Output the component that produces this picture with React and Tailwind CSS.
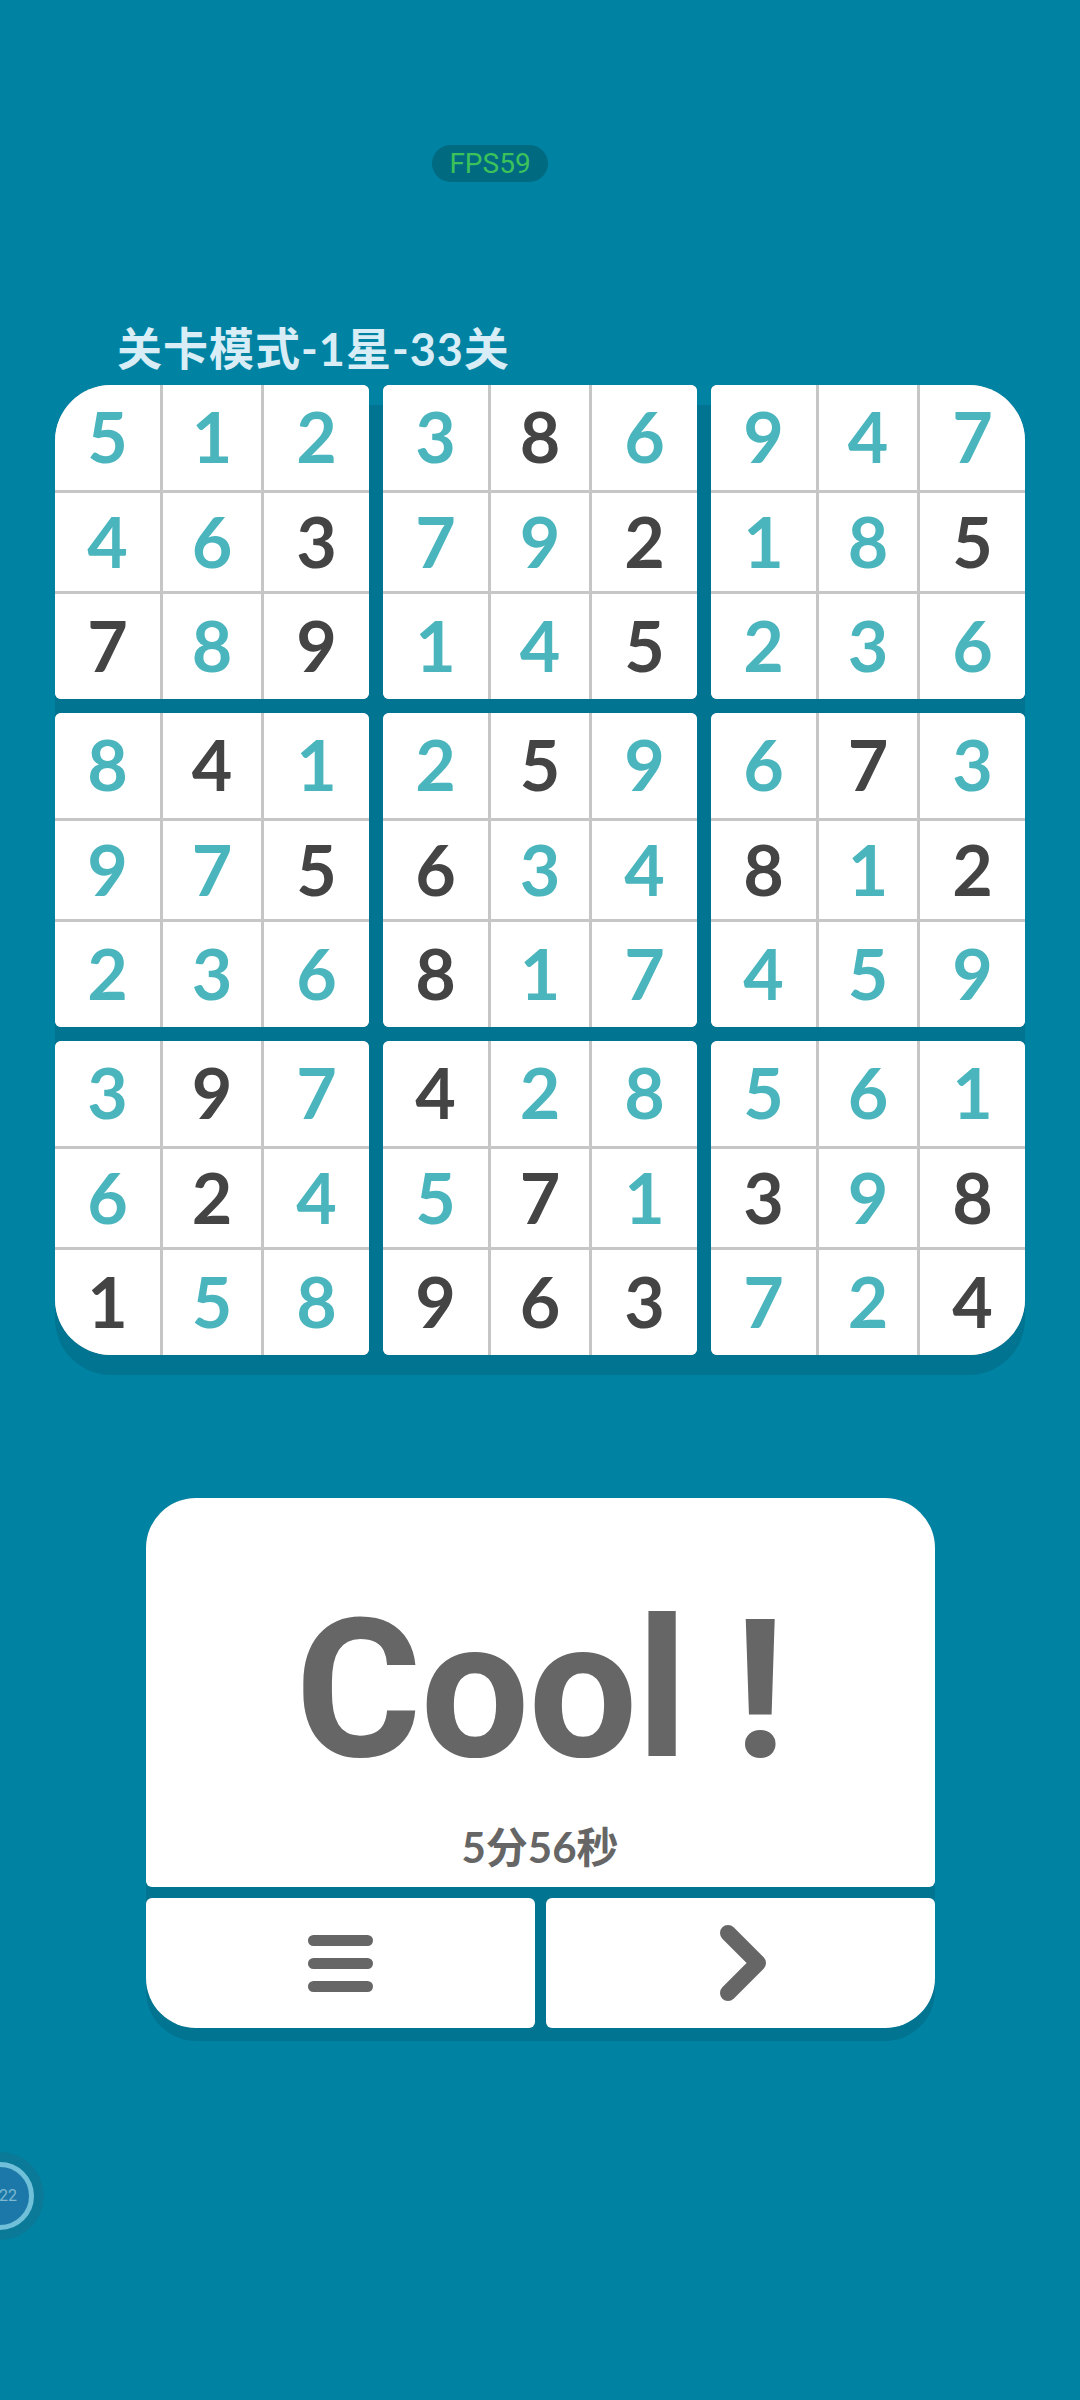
import React from 'react';

// g = given (teal), d = entered by player (dark)
const blocks = [
  ['5g 1g 2g 4g 6g 3d 7d 8g 9d', '3g 8d 6g 7g 9g 2d 1g 4g 5d', '9g 4g 7g 1g 8g 5d 2g 3g 6g'],
  ['8g 4d 1g 9g 7g 5d 2g 3g 6g', '2g 5d 9g 6d 3g 4g 8d 1g 7g', '6g 7d 3g 8d 1g 2d 4g 5g 9g'],
  ['3g 9d 7g 6g 2d 4g 1d 5g 8g', '4d 2g 8g 5g 7d 1g 9d 6d 3d', '5g 6g 1g 3d 9g 8d 7g 2g 4d'],
];

const cornerClass = {
  '0-0': 'rounded-tl-[56px]',
  '0-2': 'rounded-tr-[56px]',
  '2-0': 'rounded-bl-[56px]',
  '2-2': 'rounded-br-[56px]',
};

function Block({ cells, corner }) {
  return (
    <div className={`grid grid-cols-[105px_1fr_105px] grid-rows-[105px_1fr_105px] w-[314px] h-[314px] gap-[3px] bg-[#c6c6c6] overflow-hidden rounded-[6px] ${cornerClass[corner] || ''}`}>
      {cells.split(' ').map((c, i) => (
        <div
          key={i}
          className={`bg-white flex items-center justify-center pb-[3px] text-[70px] leading-none font-bold ${c[1] === 'g' ? 'text-[#4ab5bd]' : 'text-[#444444]'}`}
        >
          {c[0]}
        </div>
      ))}
    </div>
  );
}

export default function App() {
  return (
    <div className="relative w-[1080px] h-[2400px] overflow-hidden bg-[#0083a3] flex flex-col items-center font-['Lato','Noto_Sans_CJK_SC',sans-serif]">
      {/* FPS overlay */}
      <div className="absolute left-[432px] top-[145px] w-[116px] h-[37px] rounded-full bg-[#006a80] flex items-center justify-center text-[28px] leading-none text-[#3cc25a] font-['Roboto',sans-serif]">
        FPS59
      </div>

      {/* floating timer */}
      <div className="absolute left-[-44px] top-[2152px] w-[88px] h-[88px] rounded-full bg-[#0a7a98] flex items-center justify-center">
        <div className="w-[68px] h-[68px] rounded-full bg-[#1b78a8] border-[5px] border-[#6fc0d8] flex items-center justify-end pr-[12px] text-[16px] leading-none text-[#7fb8d0] font-['Roboto',sans-serif]">
          22
        </div>
      </div>

      <div className="mt-[322px] w-[970px] h-[54px] pl-[62px] text-[45px] leading-[54px] font-bold text-[#d8edf5] tracking-[1px] font-['Lato','Noto_Sans_CJK_SC',sans-serif]">
        关卡模式-1星-33关
      </div>

      {/* board */}
      <div className="mt-[9px] flex flex-col gap-[14px] bg-[linear-gradient(#0083a3_20px,#007490_20px)] rounded-[56px] w-[970px] shadow-[0_20px_0_#007490]">
        {blocks.map((row, r) => (
          <div key={r} className="flex gap-[14px]">
            {row.map((cells, c) => (
              <Block key={c} cells={cells} corner={`${r}-${c}`} />
            ))}
          </div>
        ))}
      </div>

      {/* result card */}
      <div className="mt-[143px] w-[789px] flex flex-col gap-[11px] bg-[#007490] rounded-[50px] shadow-[0_13px_0_#007490]">
        <div className="h-[389px] bg-white rounded-t-[50px] rounded-b-[6px] flex flex-col items-center text-[#666666]">
          <div className="mt-[72px] h-[240px] text-[193px] leading-[240px] tracking-[-1px] font-bold font-['Roboto',sans-serif]">
            Cool !
          </div>
          <div className="mt-[14px] text-[42px] leading-[46px] font-bold font-['Lato','Noto_Sans_CJK_SC',sans-serif]">
            5分56秒
          </div>
        </div>
        <div className="flex gap-[11px] h-[130px]">
          <div className="flex-1 bg-white rounded-bl-[50px] rounded-[6px] flex flex-col gap-[12px] items-center justify-center">
            <div className="w-[65px] h-[11px] rounded-full bg-[#666666]" />
            <div className="w-[65px] h-[11px] rounded-full bg-[#666666]" />
            <div className="w-[65px] h-[11px] rounded-full bg-[#666666]" />
          </div>
          <div className="flex-1 bg-white rounded-br-[50px] rounded-[6px] flex items-center justify-center">
            <svg width="48" height="76" viewBox="0 0 48 76" className="ml-[8px]">
              <path d="M8 8 L38 38 L8 68" fill="none" stroke="#666666" strokeWidth="16" strokeLinecap="round" strokeLinejoin="round" />
            </svg>
          </div>
        </div>
      </div>
    </div>
  );
}
